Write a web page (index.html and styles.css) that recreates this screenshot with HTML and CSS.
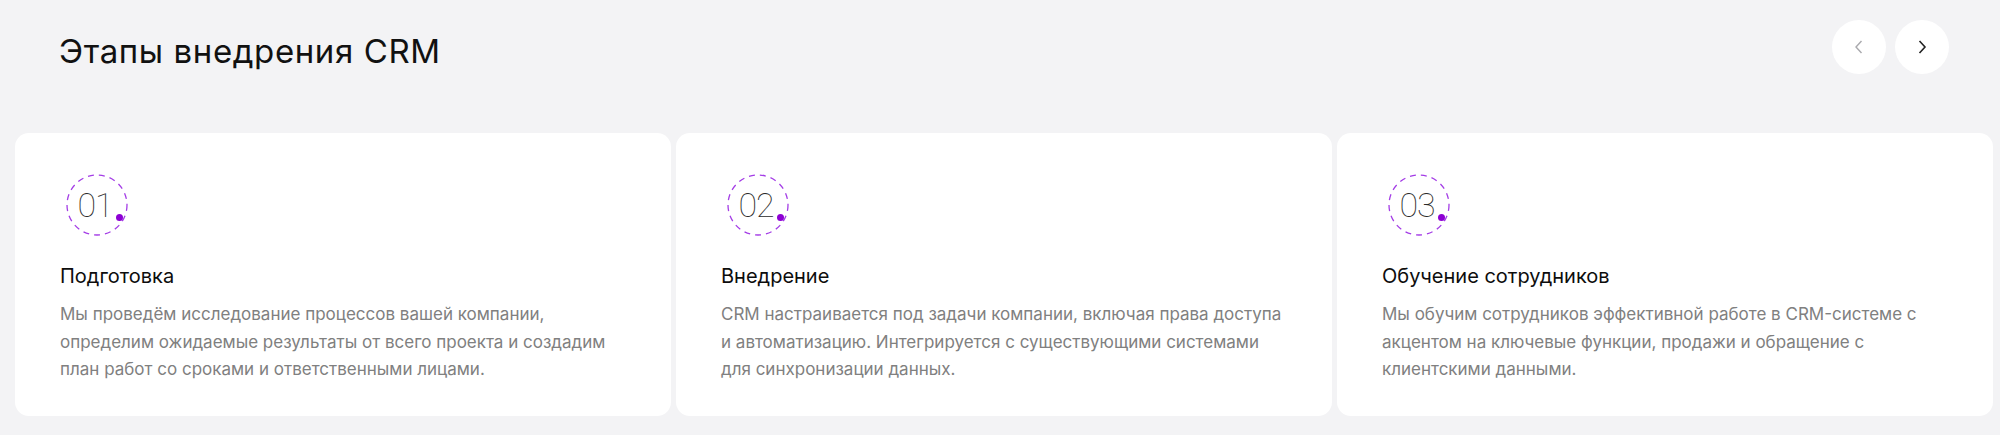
FILE: index.html
```html
<!DOCTYPE html>
<html lang="ru">
<head>
    <meta charset="UTF-8">
    <meta name="viewport" content="width=device-width, initial-scale=1.0">
    <title>Этапы внедрения CRM</title>
    <link rel="stylesheet" href="styles.css">
</head>
<body>
    <section class="stages">
        <div class="stages-head">
            <h2>Этапы внедрения CRM</h2>
            <div class="slider-nav">
                <button class="nav-btn nav-prev" aria-label="Назад">
                    <svg width="10" height="14" viewBox="0 0 10 14"><path d="M7.5 1 L2 7 L7.5 13" fill="none" stroke="currentColor" stroke-width="1.4"/></svg>
                </button>
                <button class="nav-btn nav-next" aria-label="Вперёд">
                    <svg width="10" height="14" viewBox="0 0 10 14"><path d="M2.5 1 L8 7 L2.5 13" fill="none" stroke="currentColor" stroke-width="1.6"/></svg>
                </button>
            </div>
        </div>

        <div class="stages-track">
            <div class="stage-card">
                <div class="stage-num">
                    <svg class="ring" width="62" height="62" viewBox="0 0 62 62"><circle cx="31" cy="31" r="30" fill="none" stroke="#a43de6" stroke-width="1.3" stroke-dasharray="6 5"/></svg>
                    <span>01</span>
                    <i class="dot"></i>
                </div>
                <h3>Подготовка</h3>
                <p>Мы проведём исследование процессов вашей компании, определим ожидаемые результаты от всего проекта и создадим план работ со сроками и ответственными лицами.</p>
            </div>
            <div class="stage-card">
                <div class="stage-num">
                    <svg class="ring" width="62" height="62" viewBox="0 0 62 62"><circle cx="31" cy="31" r="30" fill="none" stroke="#a43de6" stroke-width="1.3" stroke-dasharray="6 5"/></svg>
                    <span>02</span>
                    <i class="dot"></i>
                </div>
                <h3>Внедрение</h3>
                <p>CRM настраивается под задачи компании, включая права доступа и автоматизацию. Интегрируется с существующими системами для синхронизации данных.</p>
            </div>
            <div class="stage-card">
                <div class="stage-num">
                    <svg class="ring" width="62" height="62" viewBox="0 0 62 62"><circle cx="31" cy="31" r="30" fill="none" stroke="#a43de6" stroke-width="1.3" stroke-dasharray="6 5"/></svg>
                    <span>03</span>
                    <i class="dot"></i>
                </div>
                <h3>Обучение сотрудников</h3>
                <p>Мы обучим сотрудников эффективной работе в CRM-системе с акцентом на ключевые функции, продажи и обращение с клиентскими данными.</p>
            </div>
        </div>
    </section>
</body>
</html>
```

FILE: styles.css
```css
body {
    margin: 0;
    background-color: #f3f3f5;
    font-family: Inter, "Liberation Sans", sans-serif;
    color: #111;
}
.stages {
    width: 2000px;
    overflow: hidden;
}
.stages-head {
    display: flex;
    justify-content: space-between;
    align-items: flex-start;
    padding: 20px 51px 0 59px;
    height: 133px;
    box-sizing: border-box;
}
.stages-head h2 {
    margin: 15px 0 0;
    font-size: 33px;
    font-weight: 400;
    line-height: 1;
    letter-spacing: 0.6px;
}
.slider-nav {
    display: flex;
    gap: 9px;
}
.nav-btn {
    width: 54px;
    height: 54px;
    border: none;
    border-radius: 50%;
    background-color: #fff;
    display: flex;
    align-items: center;
    justify-content: center;
    padding: 0;
    cursor: pointer;
}
.nav-prev {
    color: #a9a9ad;
}
.nav-next {
    color: #222;
}
.stages-track {
    display: flex;
    gap: 5px;
    padding-left: 15px;
}
.stage-card {
    flex: 0 0 656px;
    height: 283px;
    box-sizing: border-box;
    background-color: #fff;
    border-radius: 14px;
    padding: 41px 45px 0;
}
.stage-num {
    position: relative;
    width: 62px;
    height: 62px;
    margin-left: 6px;
    display: flex;
    align-items: center;
    justify-content: center;
}
.stage-num .ring {
    position: absolute;
    left: 0;
    top: 0;
}
.stage-num span {
    font-family: Roboto, sans-serif;
    font-weight: 100;
    font-size: 34px;
    color: #2a2a2a;
    letter-spacing: -1px;
    margin-right: 4px;
}
.stage-num .dot {
    position: absolute;
    left: 50px;
    top: 40px;
    width: 7px;
    height: 7px;
    border-radius: 50%;
    background-color: #8d00d4;
}
.stage-card h3 {
    margin: 27px 0 0;
    font-size: 20px;
    font-weight: 400;
    line-height: 26px;
    color: #0d0d0d;
}
.stage-card p {
    margin: 12px 0 0;
    font-size: 17px;
    line-height: 27.5px;
    color: #808080;
}
```
